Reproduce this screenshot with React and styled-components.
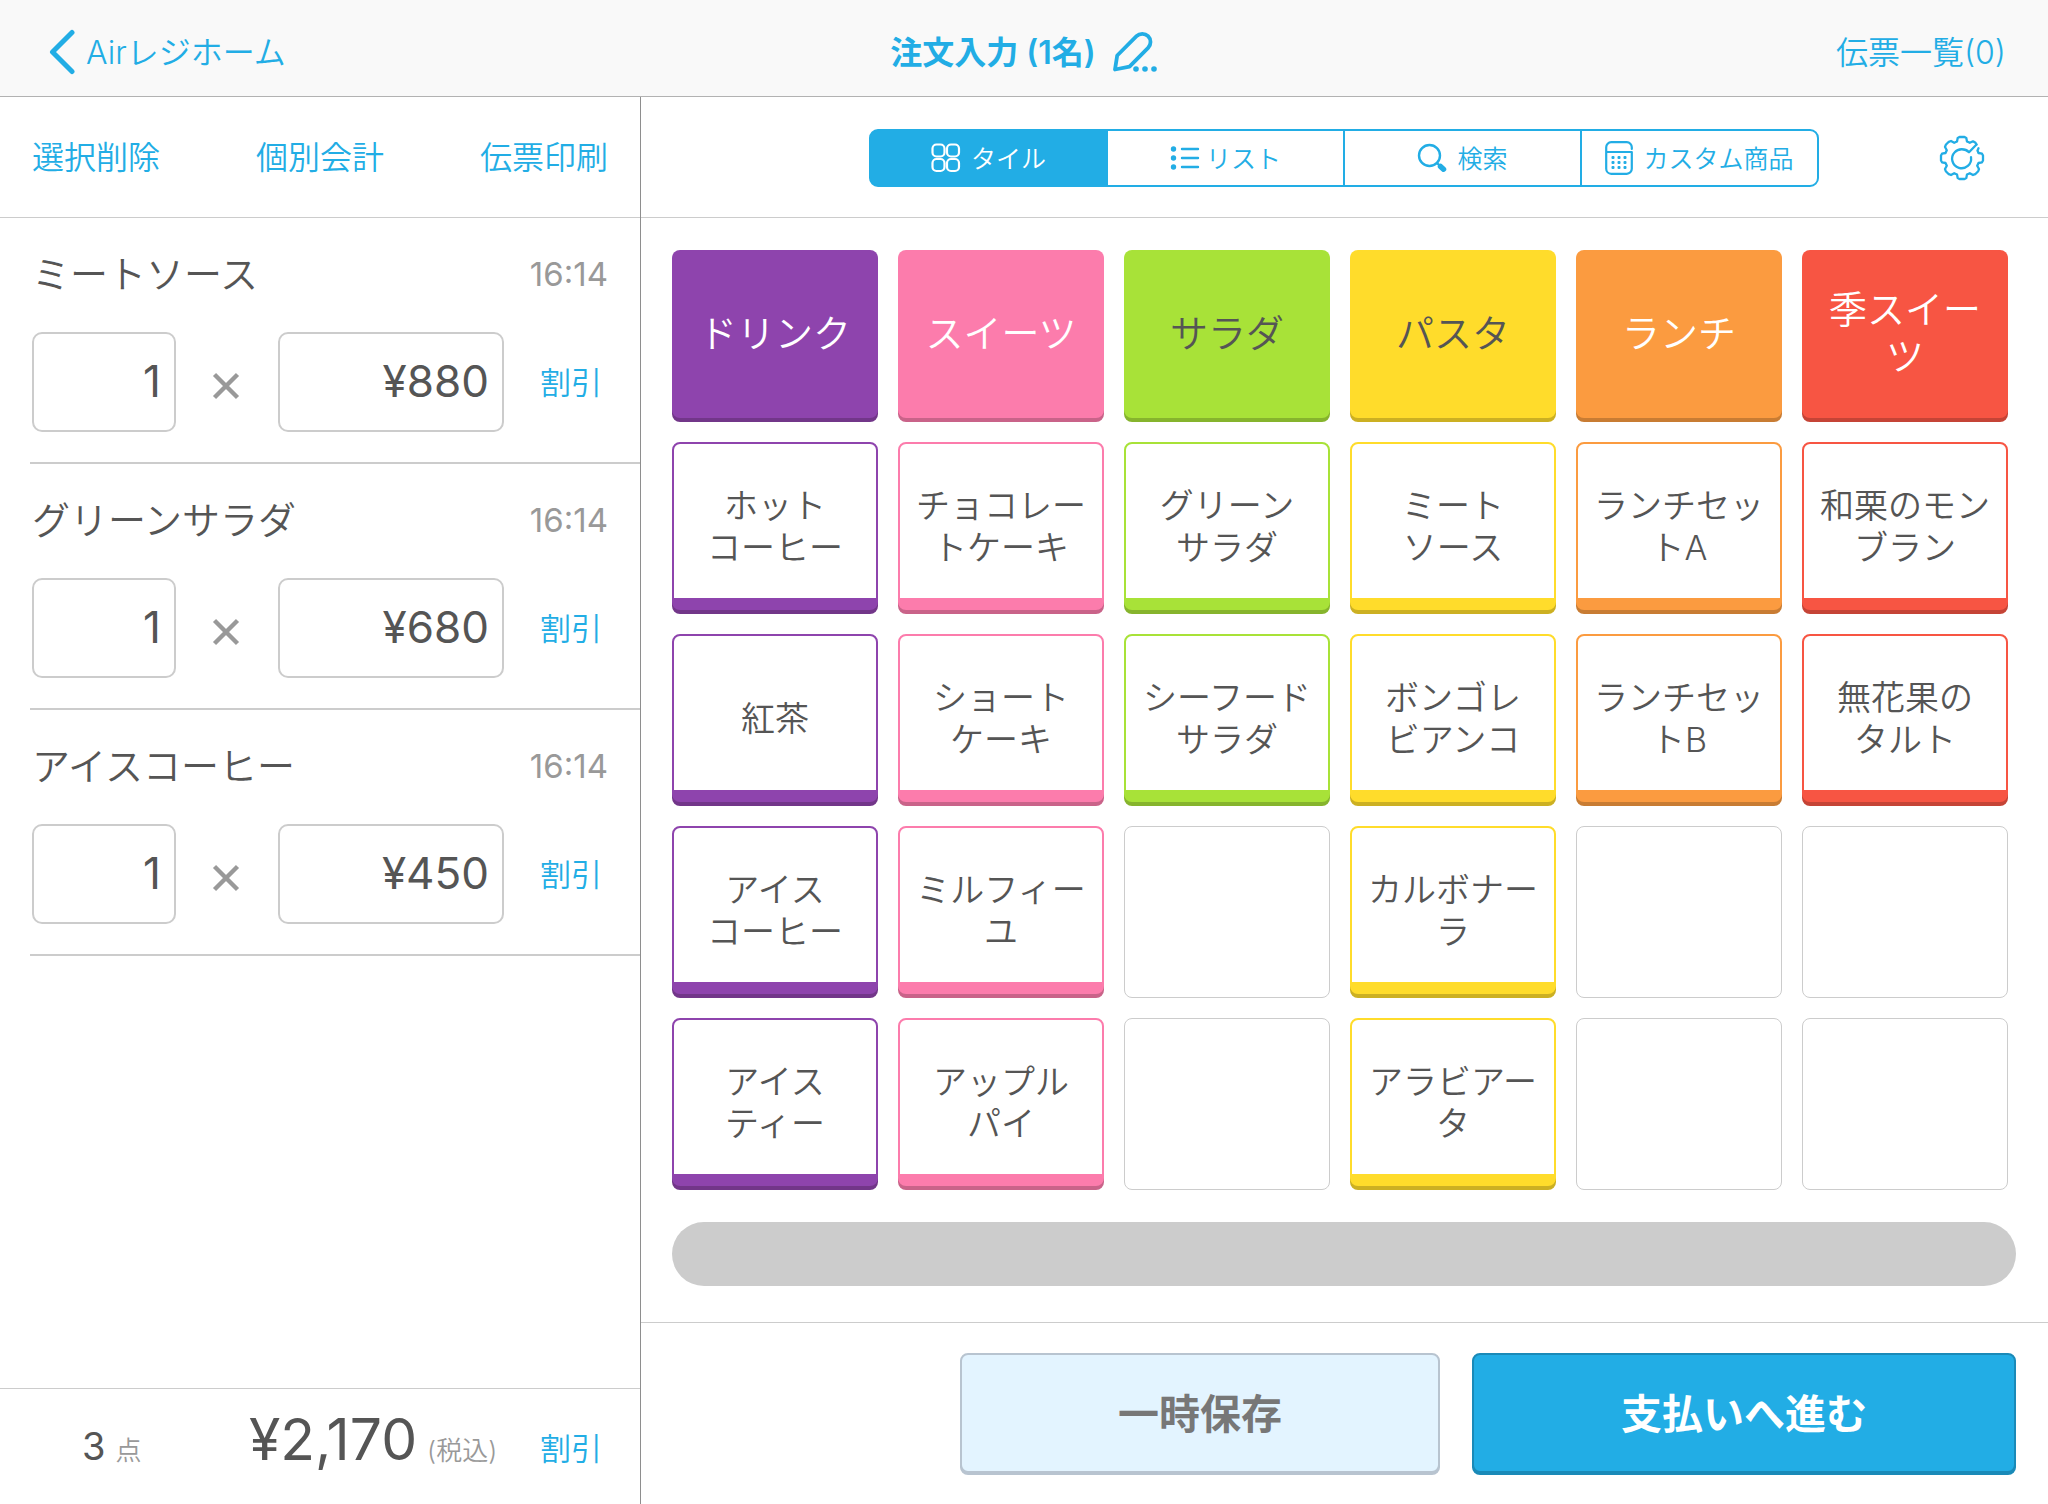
import React from "react";
import styled, { createGlobalStyle, css } from "styled-components";

const BLUE = "#22ade5";
const INK = "#555";
const GREY = "#999";
const LINE = "#ccc";

const GlobalStyle = createGlobalStyle`
  *, *::before, *::after { box-sizing: border-box; }
  body {
    margin: 0;
    background: #fff;
    color: ${INK};
    font-family: "Inter", "Noto Sans CJK JP", sans-serif;
    font-weight: 350;
  }
  button, input { font: inherit; color: inherit; }
  h1, h2, p, ul { margin: 0; padding: 0; }
`;

const Screen = styled.div`
  display: flex;
  flex-direction: column;
  min-height: 100vh;
`;

const TopBar = styled.header`
  display: grid;
  grid-template-columns: 1fr auto 1fr;
  align-items: center;
  height: 97px;
  padding: 8px 42px 0;
  background: #f9f9f9;
  border-bottom: 1px solid #b2b2b2;
  color: ${BLUE};
  font-size: 32px;
`;

const NavLink = styled.a`
  display: flex;
  align-items: center;
  gap: 10px;
  justify-self: ${(p) => (p.$end ? "end" : "start")};
  padding-left: 6px;
  color: inherit;
  text-decoration: none;
`;

const NavLabel = styled.span`
  padding-bottom: 4px;
`;

const Title = styled.h1`
  padding-bottom: 4px;
  font-size: 32px;
  font-weight: 600;
`;

const TitleGroup = styled.div`
  display: flex;
  align-items: center;
  gap: 16px;
`;

const IconButton = styled.button`
  display: flex;
  padding: 0;
  border: 0;
  background: none;
  color: ${BLUE};
  cursor: pointer;
`;

const TextButton = styled.button`
  padding: 0 0 4px;
  border: 0;
  background: none;
  color: ${BLUE};
  font-size: ${(p) => p.$size || 32}px;
  cursor: pointer;
`;

const Body = styled.div`
  display: flex;
  flex: 1;
`;

const Sidebar = styled.aside`
  display: flex;
  flex-direction: column;
  flex: 0 0 641px;
  border-right: 1px solid #8e8e8e;
`;

const barStyle = css`
  display: flex;
  align-items: center;
  height: 121px;
  border-bottom: 1px solid ${LINE};
`;

const SlipActions = styled.nav`
  ${barStyle}
  justify-content: space-between;
  padding: 0 32px;
`;

const OrderList = styled.ul`
  flex: 1;
  list-style: none;
`;

const OrderItem = styled.li`
  display: flex;
  flex-direction: column;
  gap: 30px;
  height: 246px;
  margin-left: 30px;
  padding: 28px 32px 0 2px;
  border-bottom: 2px solid ${LINE};
`;

const ItemHead = styled.div`
  display: flex;
  align-items: center;
  justify-content: space-between;
  height: 56px;
`;

const ItemName = styled.h2`
  padding-bottom: 6px;
  font-size: 38px;
  font-weight: inherit;
`;

const Time = styled.time`
  color: ${GREY};
  font-size: 33px;
  font-weight: 400;
`;

const ItemRow = styled.div`
  display: flex;
  align-items: center;
`;

const Field = styled.input`
  width: ${(p) => p.$width}px;
  height: 100px;
  padding: 0 13px 3px;
  border: 2px solid ${LINE};
  border-radius: 10px;
  background: #fff;
  font-size: 44px;
  font-weight: 400;
  text-align: right;
`;

const Times = styled.svg`
  width: 28px;
  height: 28px;
  margin: 8px 38px 0 36px;
`;

const RowDiscount = styled(TextButton)`
  margin-left: 36px;
`;

const Totals = styled.footer`
  display: flex;
  align-items: baseline;
  height: 116px;
  padding: 21px 32px 0 82px;
  border-top: 1px solid ${LINE};
  line-height: 60px;
`;

const Amount = styled.p`
  display: flex;
  align-items: baseline;
  gap: 10px;
  width: ${(p) => p.$width}px;
  font-size: ${(p) => p.$size}px;
  font-weight: 400;
`;

const Unit = styled.small`
  color: ${GREY};
  font-size: 26px;
  font-weight: 350;
`;

const Main = styled.main`
  display: flex;
  flex-direction: column;
  flex: 1;
`;

const ViewBar = styled.div`
  ${barStyle}
  display: grid;
  grid-template-columns: 1fr 950px 1fr;
  padding: 2px 1px 0 0;
`;

const Segments = styled.div`
  display: grid;
  grid-template-columns: repeat(4, 1fr);
  gap: 2px;
  height: 58px;
  border: 2px solid ${BLUE};
  border-radius: 9px;
  background: ${BLUE};
  overflow: hidden;
`;

const Segment = styled.button`
  display: flex;
  align-items: center;
  justify-content: center;
  gap: ${(p) => p.$gap}px;
  padding: 0;
  border: 0;
  background: ${(p) => (p.$active ? BLUE : "#fff")};
  color: ${(p) => (p.$active ? "#fff" : BLUE)};
  font-size: 25px;
`;

const SegmentLabel = styled.span`
  padding-bottom: 3px;
`;

const SettingsButton = styled(IconButton)`
  justify-self: end;
  margin-right: 62px;
`;

const TileArea = styled.section`
  flex: 1;
  padding: 32px 32px 36px 31px;
`;

const TileGrid = styled.div`
  display: grid;
  grid-template-columns: repeat(6, 1fr);
  gap: 20px;
  margin-right: 8px;
`;

const tileBox = css`
  height: 168px;
  margin-bottom: 4px;
  border-radius: 8px;
  box-shadow: 0 4px 0 ${(p) => p.$shade};
  text-align: center;
  white-space: pre-line;
  word-break: break-all;
`;

const CategoryTile = styled.button`
  ${tileBox}
  padding: 0 24px 2px;
  border: 0;
  background: ${(p) => p.$color};
  color: ${(p) => p.$ink};
  font-size: 38px;
  line-height: 47px;
`;

const ProductTile = styled.button`
  ${tileBox}
  padding: 12px 14px 0;
  border: 2px solid ${(p) => p.$color};
  border-bottom-width: 12px;
  background: #fff;
  color: ${INK};
  font-size: 34px;
  line-height: 42px;
`;

const EmptyTile = styled.div`
  height: 172px;
  border: 1px solid ${LINE};
  border-radius: 8px;
`;

const PageBar = styled.div`
  height: 64px;
  margin-top: 32px;
  border-radius: 32px;
  background: ${LINE};
`;

const Checkout = styled.footer`
  display: flex;
  justify-content: flex-end;
  gap: 32px;
  padding: 30px 32px 29px;
  border-top: 1px solid ${LINE};
`;

const BigButton = styled.button`
  width: ${(p) => p.$width}px;
  height: 120px;
  margin-bottom: 2px;
  padding: 0 0 4px;
  border: 2px solid ${(p) => p.$edge};
  border-radius: 8px;
  box-shadow: 0 2px 0 ${(p) => p.$edge};
  background: ${(p) => p.$fill};
  color: ${(p) => p.$ink};
  font-size: 41px;
  font-weight: 600;
`;

const stroke = {
  fill: "none",
  stroke: "currentColor",
  strokeLinecap: "round",
  strokeLinejoin: "round",
};

const BackIcon = () => (
  <svg width="28" height="46" viewBox="0 0 28 46" {...stroke} strokeWidth="5">
    <path d="M24 3.500 4.500 23 24 42.500" />
  </svg>
);

const PencilIcon = () => (
  <svg width="46" height="42" viewBox="0 0 46 42" {...stroke} strokeWidth="3.800">
    <path d="M3 38.500 5.200 24.500 24.500 5.200a8.200 8.200 0 0 1 11.600 0 8.200 8.200 0 0 1 0 11.600L17.500 35.600Z" />
    <g fill="currentColor" stroke="none">
      <circle cx="24" cy="38" r="2.800" />
      <circle cx="33" cy="38" r="2.800" />
      <circle cx="42" cy="38" r="2.800" />
    </g>
  </svg>
);

const TilesIcon = () => (
  <svg width="30" height="30" viewBox="0 0 30 30" {...stroke} strokeWidth="2.200">
    <rect x="1.500" y="1.500" width="12" height="12" rx="4" />
    <rect x="16" y="1.500" width="12" height="12" rx="4" />
    <rect x="1.500" y="16" width="12" height="12" rx="4" />
    <rect x="16" y="16" width="12" height="12" rx="4" />
  </svg>
);

const ListIcon = () => (
  <svg width="30" height="26" viewBox="0 0 30 26" {...stroke} strokeWidth="2.400">
    <path d="M12 4h16M12 13h16M12 22h16" />
    <g fill="currentColor" stroke="none">
      <circle cx="3.500" cy="4" r="2.700" />
      <circle cx="3.500" cy="13" r="2.700" />
      <circle cx="3.500" cy="22" r="2.700" />
    </g>
  </svg>
);

const SearchIcon = () => (
  <svg width="30" height="30" viewBox="0 0 30 30" {...stroke} strokeWidth="2.400">
    <circle cx="12.500" cy="12.500" r="10.500" />
    <path d="m20 20 2.500 2.500" />
    <path d="m23.500 23.500 3 2.700" strokeWidth="5.500" />
  </svg>
);

const CalculatorIcon = () => (
  <svg width="28" height="34" viewBox="0 0 28 34" {...stroke} strokeWidth="2.200">
    <path d="M26.800 8V6.200a5 5 0 0 0-5-5H6.200a5 5 0 0 0-5 5v21.600a5 5 0 0 0 5 5h15.600a5 5 0 0 0 5-5V11H1.200" />
    <g fill="currentColor" stroke="none">
      {[16, 21, 26].map((y) =>
        [8, 14, 20].map((x) => (
          <rect key={`${x}-${y}`} x={x - 1.5} y={y - 1} width="3" height="3" rx="1" />
        ))
      )}
    </g>
  </svg>
);

const GearIcon = () => (
  <svg width="46" height="46" viewBox="0 0 46 46" {...stroke} strokeWidth="2.300">
    <path d="M37.500 9.500 36.500 7.800 34 6.300 30.800 7.800 28 6.500 27.300 3 25.500 2h-5L18.700 3 18 6.500 15.200 7.800 12 6 9.800 6.800 6.800 9.800 6 12 7.800 15.200 6.500 18 3 18.700 2 20.500v5L3 27.300 6.500 28 7.800 30.800 6 34 6.800 36.200 9.800 39.200 12 40 15.200 38.200 18 39.500 18.700 43 20.500 44h5L27.300 43 28 39.500 30.800 38.200 34 40 36.200 39.200 39.200 36.200 40 34 38.200 30.800 39.500 28 43 27.300 44 25.500v-5L43 18.700 39.500 18 38.500 15.500 39.500 13.200" />
    <path d="M37.500 9.500 30 17.200C26 13 19 13.500 15.700 17.200a9.500 9.500 0 1 0 16.300 5" />
  </svg>
);

const orders = [
  { name: "ミートソース", time: "16:14", price: "¥880" },
  { name: "グリーンサラダ", time: "16:14", price: "¥680" },
  { name: "アイスコーヒー", time: "16:14", price: "¥450" },
];

const categories = [
  { name: "ドリンク", color: "#8e44ad", shade: "#723689", ink: "#fff" },
  { name: "スイーツ", color: "#fc7cac", shade: "#c96389", ink: "#fff" },
  { name: "サラダ", color: "#a8e238", shade: "#86b42d", ink: INK },
  { name: "パスタ", color: "#ffdc2b", shade: "#ccb022", ink: INK },
  { name: "ランチ", color: "#fb9b40", shade: "#c87c33", ink: "#fff" },
  { name: "季スイーツ", color: "#f75543", shade: "#c54436", ink: "#fff" },
];

const products = [
  ["ホット\nコーヒー", "チョコレートケーキ", "グリーン\nサラダ", "ミート\nソース", "ランチセットA", "和栗のモンブラン"],
  ["紅茶", "ショート\nケーキ", "シーフード\nサラダ", "ボンゴレ\nビアンコ", "ランチセットB", "無花果の\nタルト"],
  ["アイス\nコーヒー", "ミルフィーユ", null, "カルボナーラ", null, null],
  ["アイス\nティー", "アップル\nパイ", null, "アラビアータ", null, null],
];

const views = [
  { label: "タイル", Icon: TilesIcon, gap: 10 },
  { label: "リスト", Icon: ListIcon, gap: 6 },
  { label: "検索", Icon: SearchIcon, gap: 10 },
  { label: "カスタム商品", Icon: CalculatorIcon, gap: 10 },
];

function Order({ name, time, price }) {
  return (
    <OrderItem>
      <ItemHead>
        <ItemName>{name}</ItemName>
        <Time>{time}</Time>
      </ItemHead>
      <ItemRow>
        <Field $width={144} aria-label={`${name} 数量`} defaultValue="1" />
        <Times viewBox="0 0 28 28" fill="none" stroke={GREY} strokeWidth="4.400">
          <path d="M2.500 2.500 25.500 25.500M25.500 2.500 2.500 25.500" />
        </Times>
        <Field $width={226} aria-label={`${name} 単価`} defaultValue={price} />
        <RowDiscount $size={31}>割引</RowDiscount>
      </ItemRow>
    </OrderItem>
  );
}

export default function App() {
  return (
    <Screen>
      <GlobalStyle />
      <TopBar>
        <NavLink href="#home">
          <BackIcon />
          <NavLabel>Airレジホーム</NavLabel>
        </NavLink>
        <TitleGroup>
          <Title>注文入力 (1名)</Title>
          <IconButton aria-label="編集">
            <PencilIcon />
          </IconButton>
        </TitleGroup>
        <NavLink href="#slips" $end>
          <NavLabel>伝票一覧(0)</NavLabel>
        </NavLink>
      </TopBar>
      <Body>
        <Sidebar>
          <SlipActions>
            <TextButton>選択削除</TextButton>
            <TextButton>個別会計</TextButton>
            <TextButton>伝票印刷</TextButton>
          </SlipActions>
          <OrderList>
            {orders.map((order) => (
              <Order key={order.name} {...order} />
            ))}
          </OrderList>
          <Totals>
            <Amount $size={38} $width={167}>
              3<Unit>点</Unit>
            </Amount>
            <Amount $size={57} $width={291}>
              ¥2,170<Unit>(税込)</Unit>
            </Amount>
            <TextButton $size={31}>割引</TextButton>
          </Totals>
        </Sidebar>
        <Main>
          <ViewBar>
            <span />
            <Segments>
              {views.map(({ label, Icon, gap }, i) => (
                <Segment key={label} $active={i === 0} $gap={gap}>
                  <Icon />
                  <SegmentLabel>{label}</SegmentLabel>
                </Segment>
              ))}
            </Segments>
            <SettingsButton aria-label="設定">
              <GearIcon />
            </SettingsButton>
          </ViewBar>
          <TileArea>
            <TileGrid>
              {categories.map((c) => (
                <CategoryTile key={c.name} $color={c.color} $shade={c.shade} $ink={c.ink}>
                  {c.name}
                </CategoryTile>
              ))}
              {products.flatMap((row, r) =>
                row.map((name, i) =>
                  name ? (
                    <ProductTile key={name} $color={categories[i].color} $shade={categories[i].shade}>
                      {name}
                    </ProductTile>
                  ) : (
                    <EmptyTile key={`${r}-${i}`} />
                  )
                )
              )}
            </TileGrid>
            <PageBar />
          </TileArea>
          <Checkout>
            <BigButton $width={480} $fill="#e3f4ff" $edge="#b8c4d0" $ink="#777">
              一時保存
            </BigButton>
            <BigButton $width={544} $fill={BLUE} $edge="#1a8ab8" $ink="#fff">
              支払いへ進む
            </BigButton>
          </Checkout>
        </Main>
      </Body>
    </Screen>
  );
}
